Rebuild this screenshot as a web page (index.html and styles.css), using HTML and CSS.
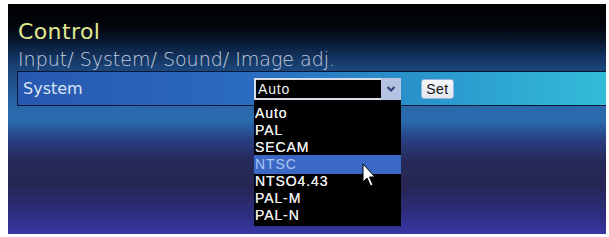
FILE: index.html
```html
<!DOCTYPE html>
<html lang="en">
<head>
    <meta charset="UTF-8">
    <title>Control</title>
    <link rel="stylesheet" href="styles.css">
</head>
<body>

    <div class="panel">
        <div class="head">
            <div class="title">Control</div>
            <div class="crumbs">Input/ System/ Sound/ Image adj.</div>
        </div>

        <div class="row">
            <span class="label">System</span>
            <div class="select">
                <span class="value">Auto</span>
                <span class="arrow">
                    <svg width="10" height="8" viewBox="0 0 10 8"><path d="M1.5 2 L5 5.5 L8.5 2" fill="none" stroke="#2c3e78" stroke-width="2"/></svg>
                </span>
                <ul class="options">
                    <li>Auto</li>
                    <li>PAL</li>
                    <li>SECAM</li>
                    <li class="active">NTSC</li>
                    <li>NTSO4.43</li>
                    <li>PAL-M</li>
                    <li>PAL-N</li>
                </ul>
            </div>
            <button class="set">Set</button>
        </div>

        <!-- mouse pointer over the list -->
        <svg class="pointer" width="14" height="25" viewBox="0 0 14 25">
            <path d="M1 1 L1 19 L5 15 L8.5 23 L11 22 L7.5 14 L13 14 Z" fill="#fff" stroke="#000" stroke-width="1"/>
        </svg>
    </div>

</body>
</html>
```

FILE: styles.css
```css
body {
    margin: 0;
    background: #fff;
    font-family: "DejaVu Sans", sans-serif;
}
.panel {
    position: relative;
    margin: 4px 0 0 8px;
    width: 598px;
    height: 230px;
    background: linear-gradient(to bottom,
        #000 0px,
        #02050c 21px,
        #08162c 36px,
        #12305a 51px,
        #1a4478 64px,
        #2a68aa 103px,
        #2a6cb0 116px,
        #283e80 136px,
        #262a5a 156px,
        #262652 181px,
        #2c2c78 206px,
        #3636a4 230px);
    overflow: hidden;
}
.head {
    padding: 17px 0 0 10px;
    height: 67px;
    box-sizing: border-box;
}
.title {
    color: #e2e88e;
    font-size: 22px;
    line-height: 22px;
    letter-spacing: 0.4px;
}
.crumbs {
    color: #c4cede;
    font-size: 19px;
    line-height: 22px;
    font-weight: 200;
    margin-top: 5px;
}
.row {
    display: flex;
    align-items: center;
    margin-left: 9px;
    height: 33px;
    border: 1px solid #0a1838;
    border-right: none;
    background: linear-gradient(to right, #2858b0, #2a6cc0 40%, #2896cc 70%, #34bcd8);
}
.label {
    width: 231px;
    padding-left: 5px;
    color: #d8e4f4;
    font-size: 16px;
}
.select {
    position: relative;
    display: flex;
    width: 147px;
    height: 22px;
    box-sizing: border-box;
    border: 2px solid #d8dde8;
    border-right: none;
    background: #000;
}
.value {
    flex: 1;
    color: #f0f0f0;
    font-family: "Liberation Sans", sans-serif;
    font-size: 14px;
    line-height: 18px;
    letter-spacing: 0.8px;
    padding-left: 2px;
}
.arrow {
    width: 20px;
    display: flex;
    align-items: center;
    justify-content: center;
    background: #b6c2e2;
    margin: -2px 0;
}
.options {
    position: absolute;
    left: -2px;
    top: 20px;
    width: 147px;
    margin: 0;
    padding: 5px 0 2px;
    list-style: none;
    background: #000;
    font-family: "Liberation Sans", sans-serif;
    font-size: 14px;
    letter-spacing: 0.9px;
}
.options li {
    height: 17px;
    line-height: 17px;
    padding-left: 1px;
    color: #ececec;
    text-shadow: 0 0 0.3px #fff;
}
.options li.active {
    background: #3a68c4;
    color: #a8c6f2;
    text-shadow: none;
    height: 19px;
    line-height: 19px;
    margin: -1px 0;
}
.set {
    margin-left: 20px;
    width: 33px;
    height: 20px;
    padding: 0;
    border: 1px solid #9ab4dc;
    border-radius: 3px;
    background: linear-gradient(#f6f8fb, #e2e6ee);
    color: #111;
    font-family: "Liberation Sans", sans-serif;
    font-size: 14px;
    letter-spacing: 0.5px;
}
.pointer {
    position: absolute;
    left: 354px;
    top: 159px;
}
```
